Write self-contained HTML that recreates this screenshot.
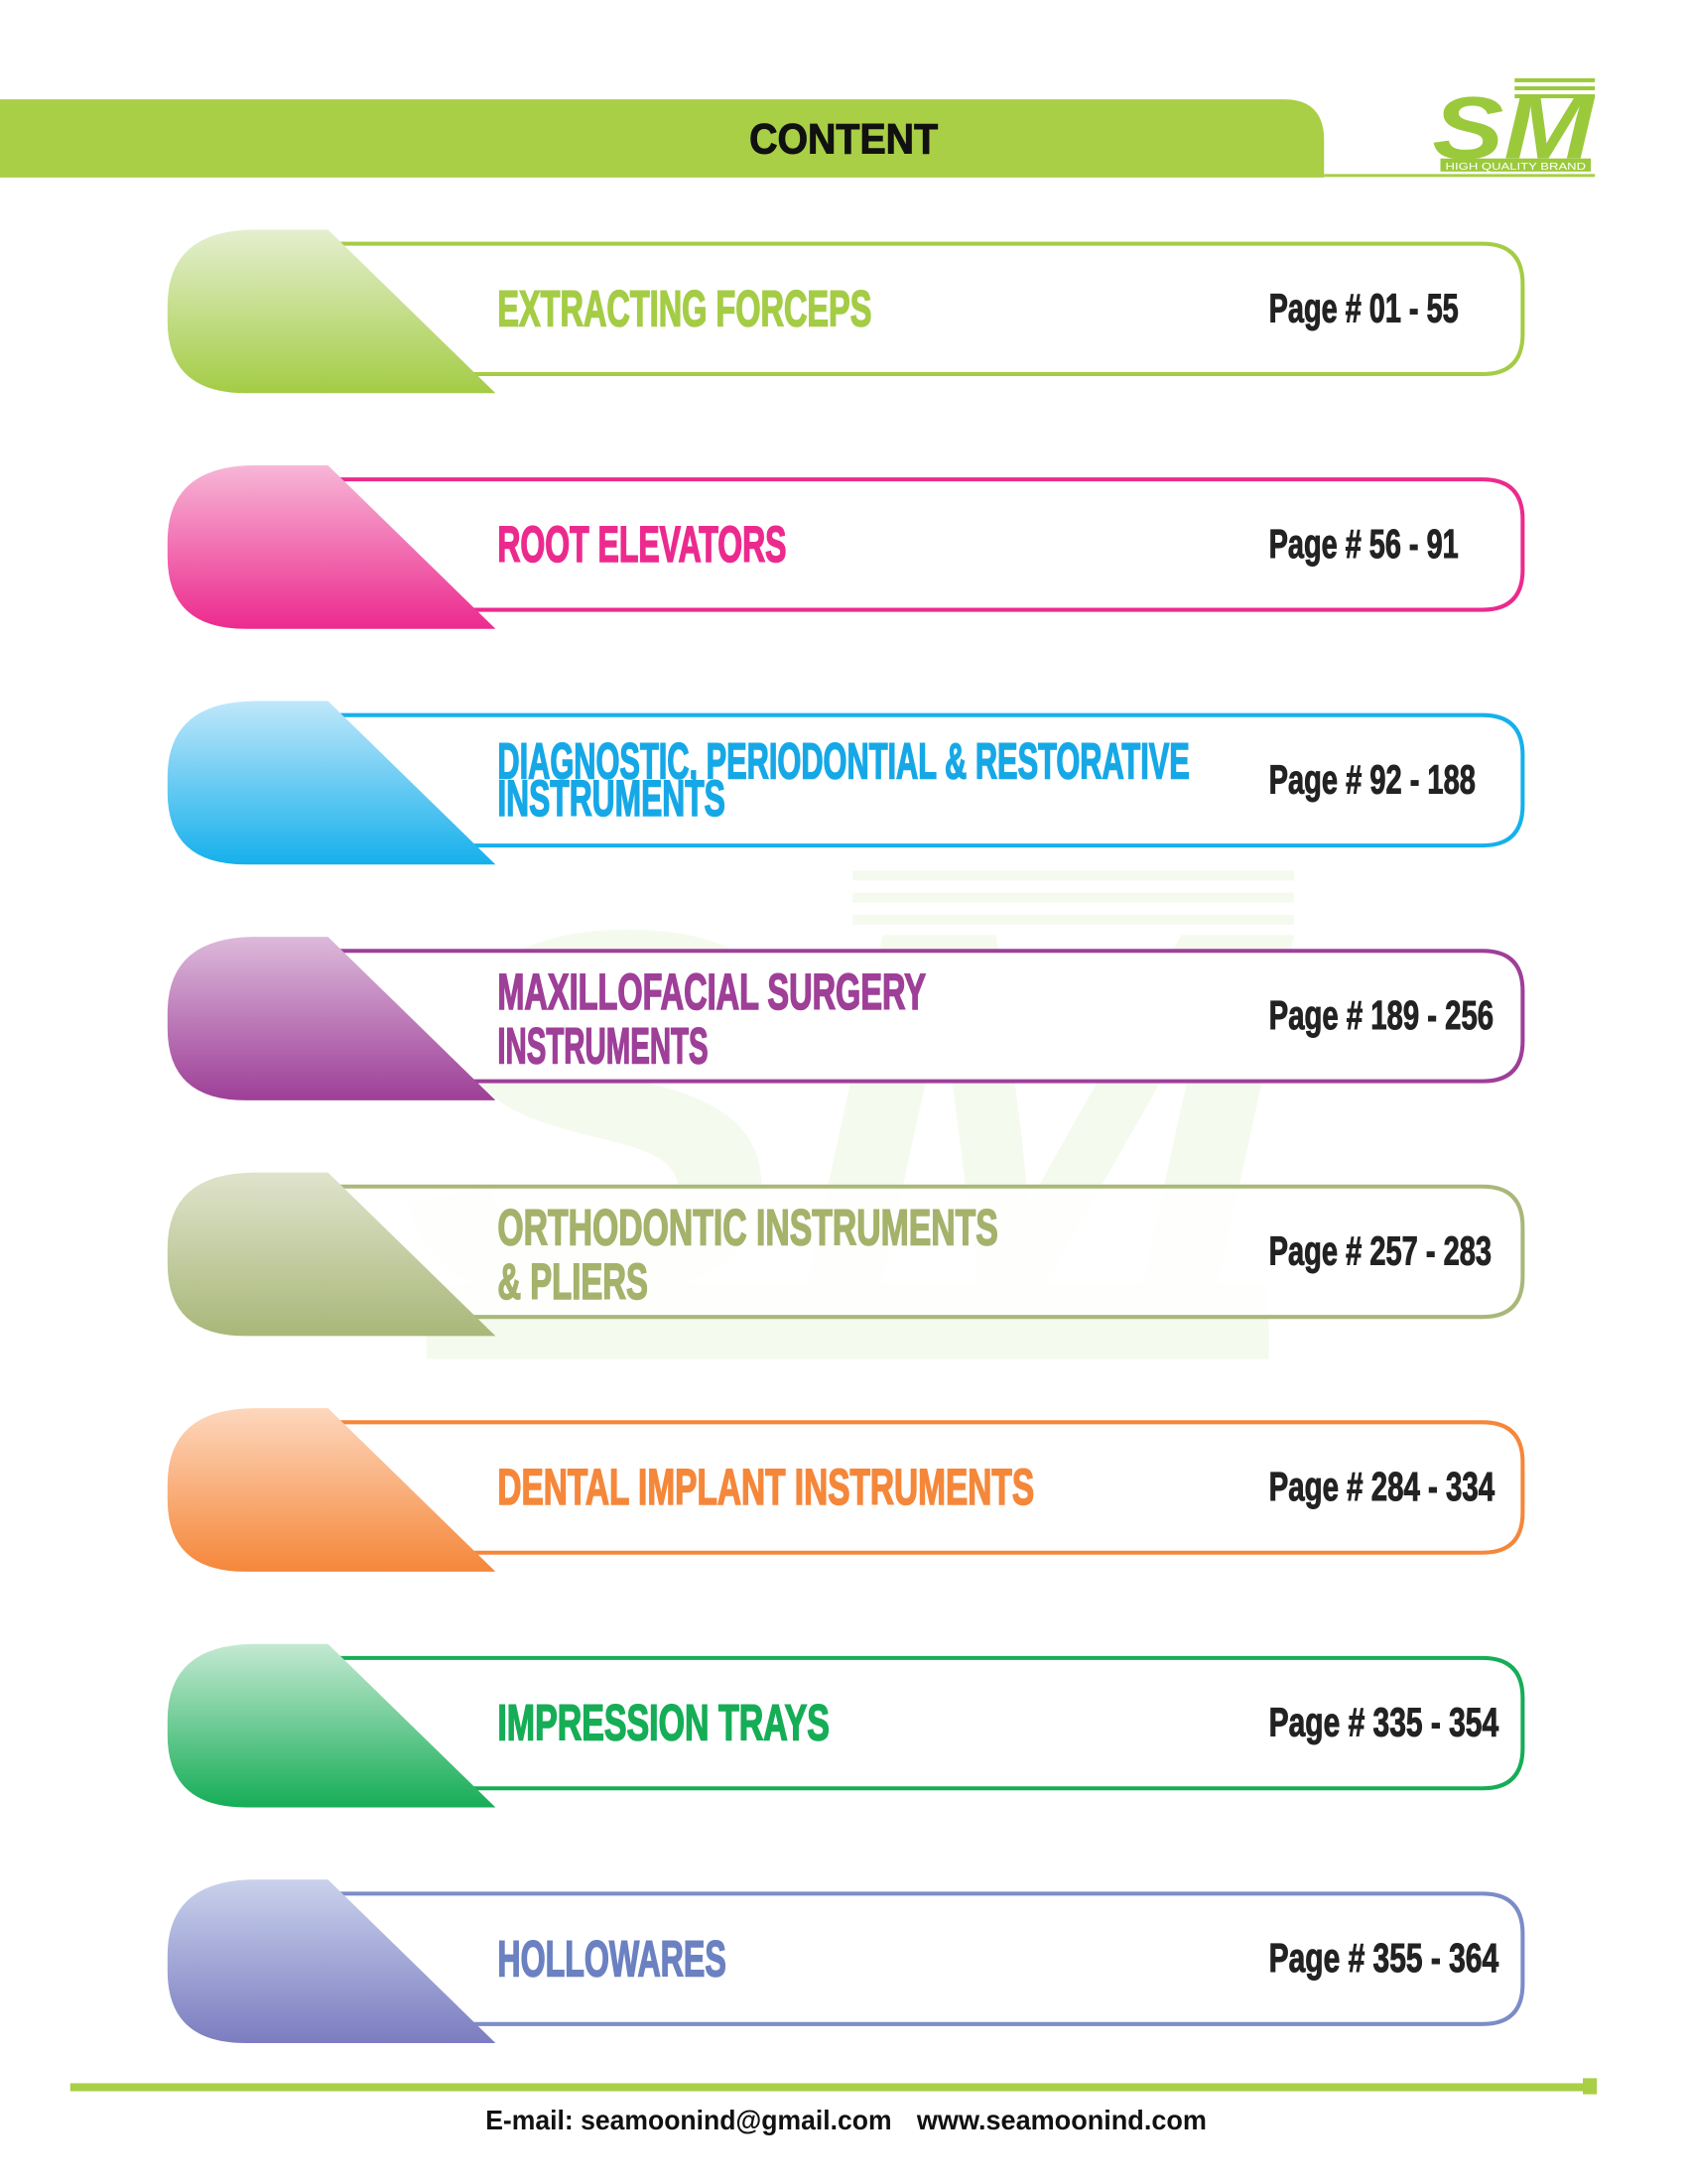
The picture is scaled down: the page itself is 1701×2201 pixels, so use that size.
<!DOCTYPE html>
<html><head><meta charset="utf-8"><style>
html,body{margin:0;padding:0;background:#fff;}
svg{display:block;}
.t{font-family:"Liberation Sans Narrow","Liberation Sans",sans-serif;font-weight:bold;font-size:50px;stroke-width:1.6;}
.p{font-family:"Liberation Sans Narrow","Liberation Sans",sans-serif;font-weight:bold;font-size:40px;fill:#222;stroke:#222;stroke-width:1;}
</style></head><body>
<svg width="1701" height="2201" viewBox="0 0 1701 2201" xmlns="http://www.w3.org/2000/svg">
<defs>
<linearGradient id="g0" x1="0" y1="0" x2="0" y2="1"><stop offset="0" stop-color="#e4efcf"/><stop offset="1" stop-color="#a4cc45"/></linearGradient>
<linearGradient id="g1" x1="0" y1="0" x2="0" y2="1"><stop offset="0" stop-color="#f7b6d6"/><stop offset="1" stop-color="#ec2a8e"/></linearGradient>
<linearGradient id="g2" x1="0" y1="0" x2="0" y2="1"><stop offset="0" stop-color="#bfe7fa"/><stop offset="1" stop-color="#16b0ec"/></linearGradient>
<linearGradient id="g3" x1="0" y1="0" x2="0" y2="1"><stop offset="0" stop-color="#dcb9da"/><stop offset="1" stop-color="#9e3f98"/></linearGradient>
<linearGradient id="g4" x1="0" y1="0" x2="0" y2="1"><stop offset="0" stop-color="#dfe3cc"/><stop offset="1" stop-color="#a9b779"/></linearGradient>
<linearGradient id="g5" x1="0" y1="0" x2="0" y2="1"><stop offset="0" stop-color="#fdd7bd"/><stop offset="1" stop-color="#f5873a"/></linearGradient>
<linearGradient id="g6" x1="0" y1="0" x2="0" y2="1"><stop offset="0" stop-color="#c4e9d2"/><stop offset="1" stop-color="#16ad57"/></linearGradient>
<linearGradient id="g7" x1="0" y1="0" x2="0" y2="1"><stop offset="0" stop-color="#c9d1ec"/><stop offset="1" stop-color="#7b7dc0"/></linearGradient>
</defs>
<g transform="scale(1.0108)">
<!-- header -->
<path d="M0 99 H1280 Q1320 99 1320 140 V177 H0 Z" fill="#a8cf45"/>
<line x1="1320" y1="175" x2="1590" y2="175" stroke="#a8cf45" stroke-width="3"/>
<text x="841" y="153" text-anchor="middle" font-family="Liberation Sans Narrow,Liberation Sans,sans-serif" font-weight="bold" font-size="42" fill="#111" stroke="#111" stroke-width="1" textLength="188" lengthAdjust="spacingAndGlyphs">CONTENT</text>
<!-- logo -->
<g fill="#9bc93c">
<rect x="1510" y="78" width="80" height="4"/><rect x="1510" y="86" width="80" height="4"/><rect x="1510" y="94" width="80" height="4"/>
<text x="1428" y="158" font-family="Liberation Sans,sans-serif" font-weight="bold" font-style="italic" font-size="88" textLength="160" lengthAdjust="spacingAndGlyphs">SM</text>
<rect x="1436" y="158" width="150" height="13"/>
</g>
<text x="1511" y="169" text-anchor="middle" font-family="Liberation Sans,sans-serif" font-size="10" fill="#fff" textLength="140" lengthAdjust="spacingAndGlyphs">HIGH QUALITY BRAND</text>
<!-- watermark -->
<g opacity="0.08" fill="#8dc63f">
<rect x="850" y="868" width="440" height="10"/><rect x="850" y="890" width="440" height="10"/><rect x="850" y="912" width="440" height="10"/>
<text x="400" y="1290" font-family="Liberation Sans,sans-serif" font-weight="bold" font-style="italic" font-size="520" textLength="880" lengthAdjust="spacingAndGlyphs">SM</text>
<rect x="425" y="1280" width="840" height="75"/>
</g>

<g transform="translate(0,0)">
<path d="M300 243 H1478 Q1518 243 1518 283 V333 Q1518 373 1478 373 H300 Z" fill="#fff" stroke="#a4cc45" stroke-width="4"/>
<path d="M255 229 H327 L494 392 H245 Q167 392 167 320 V305 Q167 229 255 229 Z" fill="url(#g0)"/>
<text class="t" x="496" y="325" fill="#a4cc45" stroke="#a4cc45" textLength="373" lengthAdjust="spacingAndGlyphs">EXTRACTING FORCEPS</text>
<text class="p" x="1265" y="321" textLength="189" lengthAdjust="spacingAndGlyphs">Page # 01 - 55</text>
</g>
<g transform="translate(0,235)">
<path d="M300 243 H1478 Q1518 243 1518 283 V333 Q1518 373 1478 373 H300 Z" fill="#fff" stroke="#ec2a8e" stroke-width="4"/>
<path d="M255 229 H327 L494 392 H245 Q167 392 167 320 V305 Q167 229 255 229 Z" fill="url(#g1)"/>
<text class="t" x="496" y="325" fill="#ec2a8e" stroke="#ec2a8e" textLength="288" lengthAdjust="spacingAndGlyphs">ROOT ELEVATORS</text>
<text class="p" x="1265" y="321" textLength="189" lengthAdjust="spacingAndGlyphs">Page # 56 - 91</text>
</g>
<g transform="translate(0,470)">
<path d="M300 243 H1478 Q1518 243 1518 283 V333 Q1518 373 1478 373 H300 Z" fill="#fff" stroke="#16b0ec" stroke-width="4"/>
<path d="M255 229 H327 L494 392 H245 Q167 392 167 320 V305 Q167 229 255 229 Z" fill="url(#g2)"/>
<text class="t" x="496" y="306" fill="#16a8e6" stroke="#16a8e6" textLength="690" lengthAdjust="spacingAndGlyphs">DIAGNOSTIC, PERIODONTIAL &amp; RESTORATIVE</text>
<text class="t" x="496" y="343" fill="#16a8e6" stroke="#16a8e6" textLength="227" lengthAdjust="spacingAndGlyphs">INSTRUMENTS</text>
<text class="p" x="1265" y="321" textLength="206" lengthAdjust="spacingAndGlyphs">Page # 92 - 188</text>
</g>
<g transform="translate(0,705)">
<path d="M300 243 H1478 Q1518 243 1518 283 V333 Q1518 373 1478 373 H300 Z" fill="#fff" stroke="#9e3f98" stroke-width="4"/>
<path d="M255 229 H327 L494 392 H245 Q167 392 167 320 V305 Q167 229 255 229 Z" fill="url(#g3)"/>
<text class="t" x="496" y="301" fill="#9e3f98" stroke="#9e3f98" textLength="427" lengthAdjust="spacingAndGlyphs">MAXILLOFACIAL SURGERY</text>
<text class="t" x="496" y="355" fill="#9e3f98" stroke="#9e3f98" textLength="210" lengthAdjust="spacingAndGlyphs">INSTRUMENTS</text>
<text class="p" x="1265" y="321" textLength="224" lengthAdjust="spacingAndGlyphs">Page # 189 - 256</text>
</g>
<g transform="translate(0,940)">
<path d="M300 243 H1478 Q1518 243 1518 283 V333 Q1518 373 1478 373 H300 Z" fill="#fff" fill-opacity="0.85" stroke="#a9b779" stroke-width="4"/>
<path d="M255 229 H327 L494 392 H245 Q167 392 167 320 V305 Q167 229 255 229 Z" fill="url(#g4)"/>
<text class="t" x="496" y="301" fill="#a4b26b" stroke="#a4b26b" textLength="499" lengthAdjust="spacingAndGlyphs">ORTHODONTIC INSTRUMENTS</text>
<text class="t" x="496" y="355" fill="#a4b26b" stroke="#a4b26b" textLength="150" lengthAdjust="spacingAndGlyphs">&amp; PLIERS</text>
<text class="p" x="1265" y="321" textLength="222" lengthAdjust="spacingAndGlyphs">Page # 257 - 283</text>
</g>
<g transform="translate(0,1175)">
<path d="M300 243 H1478 Q1518 243 1518 283 V333 Q1518 373 1478 373 H300 Z" fill="#fff" stroke="#f5873a" stroke-width="4"/>
<path d="M255 229 H327 L494 392 H245 Q167 392 167 320 V305 Q167 229 255 229 Z" fill="url(#g5)"/>
<text class="t" x="496" y="325" fill="#f5873a" stroke="#f5873a" textLength="535" lengthAdjust="spacingAndGlyphs">DENTAL IMPLANT INSTRUMENTS</text>
<text class="p" x="1265" y="321" textLength="225" lengthAdjust="spacingAndGlyphs">Page # 284 - 334</text>
</g>
<g transform="translate(0,1410)">
<path d="M300 243 H1478 Q1518 243 1518 283 V333 Q1518 373 1478 373 H300 Z" fill="#fff" stroke="#16ad57" stroke-width="4"/>
<path d="M255 229 H327 L494 392 H245 Q167 392 167 320 V305 Q167 229 255 229 Z" fill="url(#g6)"/>
<text class="t" x="496" y="325" fill="#16ad57" stroke="#16ad57" textLength="331" lengthAdjust="spacingAndGlyphs">IMPRESSION TRAYS</text>
<text class="p" x="1265" y="321" textLength="229" lengthAdjust="spacingAndGlyphs">Page # 335 - 354</text>
</g>
<g transform="translate(0,1645)">
<path d="M300 243 H1478 Q1518 243 1518 283 V333 Q1518 373 1478 373 H300 Z" fill="#fff" stroke="#7b8cc8" stroke-width="4"/>
<path d="M255 229 H327 L494 392 H245 Q167 392 167 320 V305 Q167 229 255 229 Z" fill="url(#g7)"/>
<text class="t" x="496" y="325" fill="#6b81c1" stroke="#6b81c1" textLength="228" lengthAdjust="spacingAndGlyphs">HOLLOWARES</text>
<text class="p" x="1265" y="321" textLength="229" lengthAdjust="spacingAndGlyphs">Page # 355 - 364</text>
</g>
<!-- footer -->
<rect x="70" y="2077" width="1515" height="8" fill="#a8cf45"/>
<rect x="1578" y="2072" width="14" height="16" fill="#a8cf45"/>
<text x="484" y="2123" font-family="Liberation Sans,sans-serif" font-weight="bold" font-size="27" fill="#111" textLength="405" lengthAdjust="spacingAndGlyphs">E-mail: seamoonind@gmail.com</text>
<text x="914" y="2123" font-family="Liberation Sans,sans-serif" font-weight="bold" font-size="27" fill="#111" textLength="289" lengthAdjust="spacingAndGlyphs">www.seamoonind.com</text>
</g>
</svg>
</body></html>
